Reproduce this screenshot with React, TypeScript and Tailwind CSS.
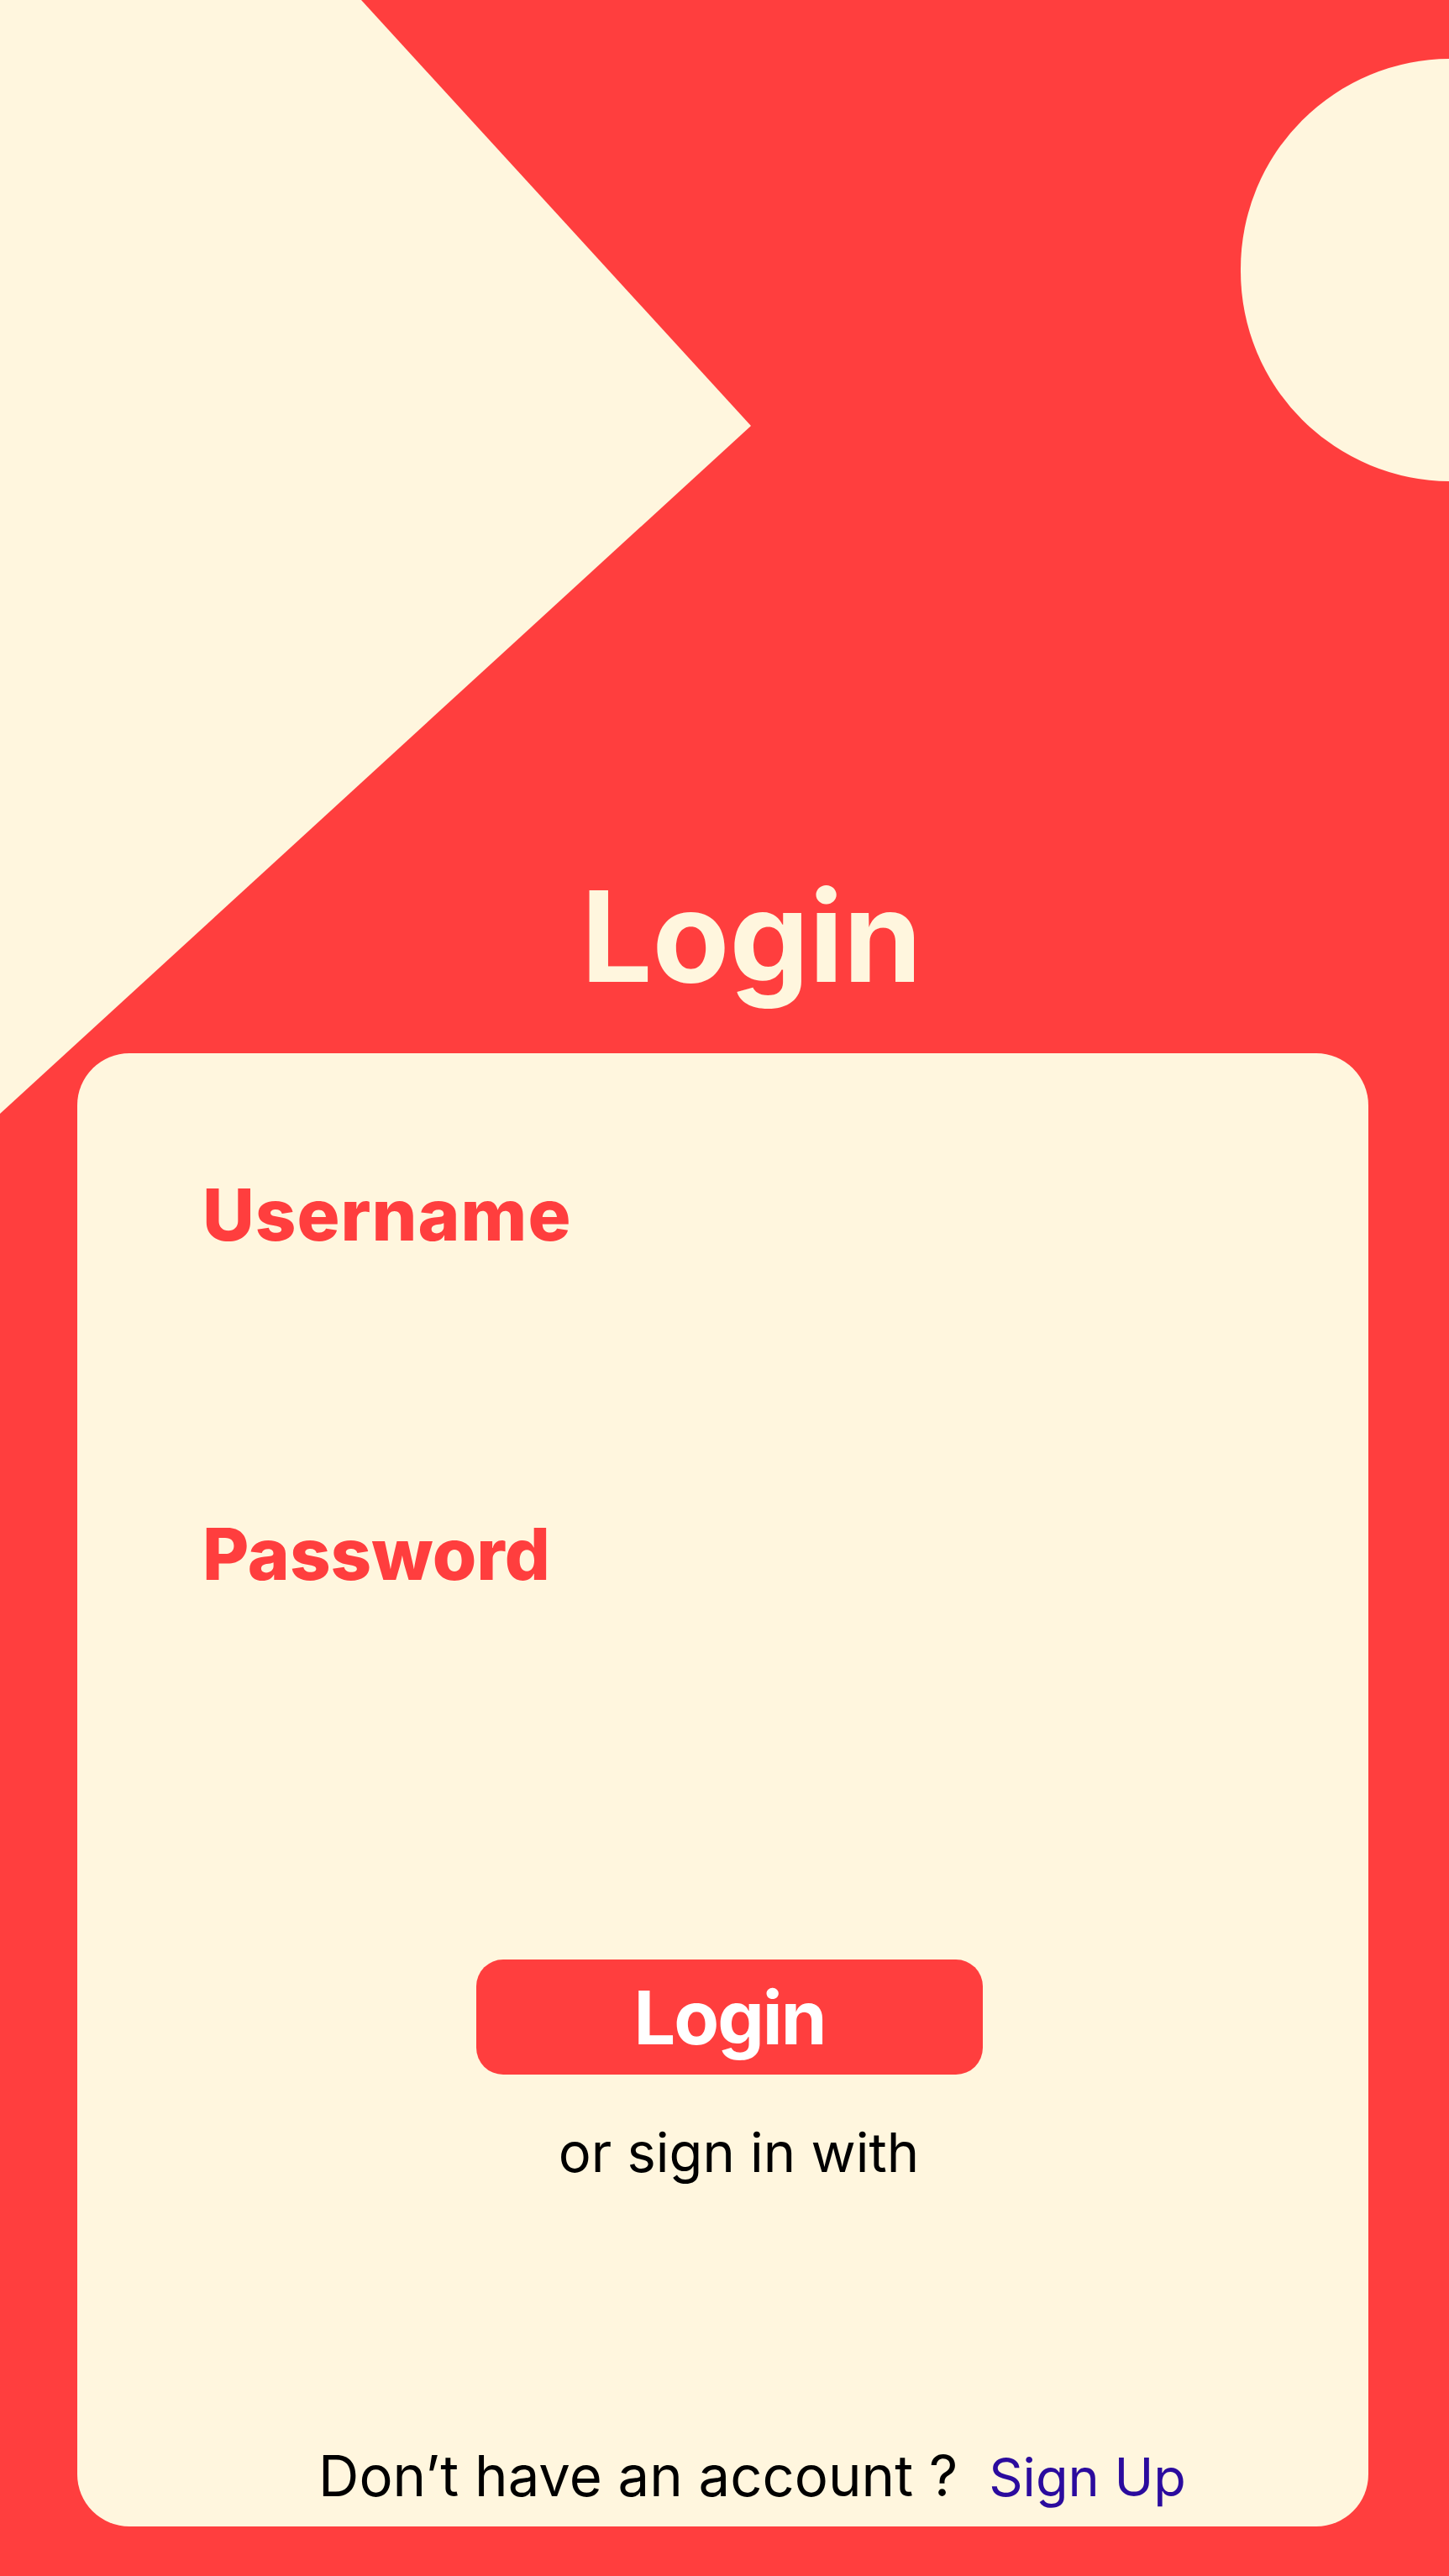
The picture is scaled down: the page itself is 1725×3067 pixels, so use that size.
import React from 'react';

const App: React.FC = () => {
    return (
        <div className="relative w-[1725px] h-[3067px] overflow-hidden bg-[#ff3e3e] font-['Inter',sans-serif]">
            {/* Decorative background shapes */}
            <svg
                className="absolute left-0 top-0"
                width="1725"
                height="1400"
                viewBox="0 0 1725 1400"
            >
                <polygon points="0,0 430,0 894,507 0,1326" fill="#fff6de" />
            </svg>
            <div className="absolute left-[1477px] top-[70px] w-[500px] h-[503px] rounded-full bg-[#fff6de]" />

            <div className="relative flex flex-col">
                {/* Title */}
                <div className="pt-[1040px] h-[1254px]">
                    <h1 className="text-center text-[150px] leading-none font-bold tracking-[0px] text-[#fff6de] pl-[64px]">
                        Login
                    </h1>
                </div>

                {/* Card */}
                <div className="ml-[92px] w-[1537px] h-[1754px] rounded-[62px] bg-[#fff6de] flex flex-col pt-[150px] pl-[149px] pb-[27px]">
                    <label className="text-[85px] leading-none font-extrabold text-[#ff3e3e] tracking-[1px]">
                        Username
                    </label>
                    <label className="mt-[319px] text-[85px] leading-none font-extrabold text-[#ff3e3e] tracking-[0px]">
                        Password
                    </label>

                    <button className="mt-[440px] ml-[326px] w-[603px] h-[137px] rounded-[32px] bg-[#ff3e3e] text-white text-[88px] leading-none font-bold tracking-[-2px] flex items-center justify-center">
                        Login
                    </button>

                    <p className="mt-[60px] -ml-[149px] text-center text-[65px] leading-none text-black pl-[38px]">
                        or sign in with
                    </p>

                    <div className="mt-auto -ml-[149px] flex justify-center items-baseline leading-none pl-[70px]">
                        <span className="text-[67px] text-black">Don’t have an account ?</span>
                        <span className="ml-[37px] text-[63px] text-[#2b0b9e]">Sign Up</span>
                    </div>
                </div>
            </div>
        </div>
    );
};

export default App;
